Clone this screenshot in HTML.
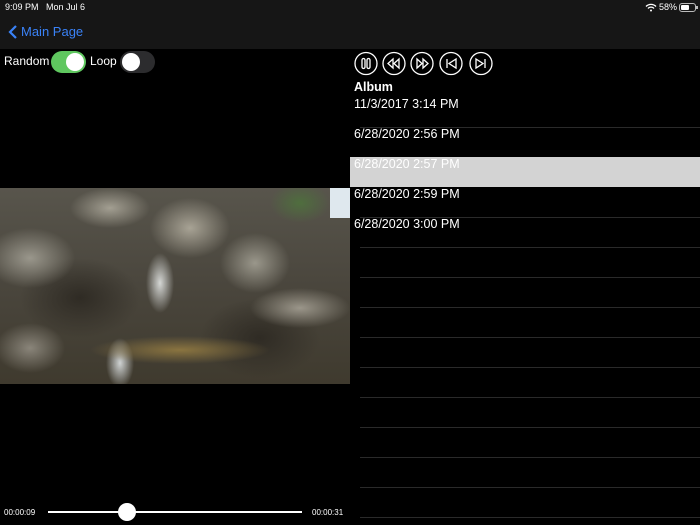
<!DOCTYPE html>
<html><head><style>
body{margin:0;width:700px;height:525px;background:#000;font-family:"Liberation Sans",sans-serif;color:#fff;position:relative;overflow:hidden}
.a{position:absolute}
.sep{position:absolute;left:360px;right:0;height:1px;background:#2a2a2a}
.row{position:absolute;left:354px;font-size:12.5px}
</style></head><body>
<div class="a" style="left:0;top:0;width:700px;height:49px;background:#161616"></div>
<div class="a" style="left:5px;top:2px;font-size:9px">9:09 PM&nbsp;&nbsp;&nbsp;Mon Jul 6</div>
<div class="a" style="left:659px;top:2px;font-size:9px">58%</div>
<svg class="a" style="left:645px;top:3px" width="12" height="9" viewBox="0 0 12 9"><path d="M1 3.5a7 7 0 0 1 10 0M3 5.5a4 4 0 0 1 6 0" stroke="#fff" stroke-width="1.3" fill="none"/><circle cx="6" cy="7.5" r="1" fill="#fff"/></svg>
<div class="a" style="left:679px;top:3px;width:17px;height:9px;border:1px solid #bbb;border-radius:3px;box-sizing:border-box"><div style="margin:1px;width:8px;height:5px;background:#fff;border-radius:1px"></div></div>
<div class="a" style="left:696px;top:6px;width:1.5px;height:3px;background:#bbb"></div>
<svg class="a" style="left:8px;top:24px" width="10" height="16"><path d="M8 2L2 8l6 6" stroke="#3a82f7" stroke-width="2.2" fill="none"/></svg>
<div class="a" style="left:21px;top:24px;font-size:13px;color:#3a82f7">Main Page</div>
<div class="a" style="left:4px;top:54px;font-size:12px">Random</div>
<div class="a" style="left:51px;top:51px;width:35px;height:22px;border-radius:11px;background:#5fc75f"><div style="position:absolute;right:2px;top:2px;width:18px;height:18px;border-radius:50%;background:#fff"></div></div>
<div class="a" style="left:90px;top:54px;font-size:12px">Loop</div>
<div class="a" style="left:120px;top:51px;width:35px;height:22px;border-radius:11px;background:#2c2c2e"><div style="position:absolute;left:2px;top:2px;width:18px;height:18px;border-radius:50%;background:#fff"></div></div>

<div class="a" style="left:0;top:188px;width:350px;height:196px;background:
radial-gradient(ellipse 45px 30px at 30px 70px,#9a978c,transparent),
radial-gradient(ellipse 35px 30px at 255px 75px,#9a978b,transparent),
radial-gradient(ellipse 40px 30px at 190px 40px,#a8a395,transparent),
radial-gradient(ellipse 90px 14px at 180px 162px,#8a7440,transparent),
radial-gradient(ellipse 35px 25px at 30px 160px,#8a857a,transparent),
radial-gradient(ellipse 50px 20px at 300px 120px,#9b968a,transparent),
radial-gradient(ellipse 14px 30px at 160px 95px,#d5d7d5,transparent),
radial-gradient(ellipse 14px 25px at 120px 175px,#cfd3d3,transparent),
radial-gradient(ellipse 40px 20px at 110px 20px,#a39f92,transparent),
radial-gradient(ellipse 30px 20px at 300px 15px,#4f6e3e,transparent),
radial-gradient(ellipse 60px 40px at 80px 110px,#2f2b24,transparent),
radial-gradient(ellipse 60px 40px at 260px 150px,#2f2b24,transparent),
linear-gradient(#58554c,#4a463d 50%,#3f3a2e)"></div>
<div class="a" style="left:330px;top:188px;width:20px;height:30px;background:#dfe8ee"></div>

<div class="a" style="left:4px;top:508px;font-size:8px">00:00:09</div>
<div class="a" style="left:48px;top:511px;width:254px;height:2px;background:#fff"></div>
<div class="a" style="left:118px;top:503px;width:18px;height:18px;border-radius:50%;background:#fff"></div>
<div class="a" style="left:312px;top:508px;font-size:8px">00:00:31</div>

<svg class="a" style="left:354px;top:51px" width="140" height="25" viewBox="0 0 140 25" fill="none" stroke="#fff" stroke-width="1.3">
<circle cx="12" cy="12.5" r="11"/><rect x="8" y="7.5" width="3" height="10" rx="1.5"/><rect x="13" y="7.5" width="3" height="10" rx="1.5"/>
<circle cx="40" cy="12.5" r="11"/><path d="M39 8l-5 4.5 5 4.5zM45 8l-5 4.5 5 4.5z"/>
<circle cx="68" cy="12.5" r="11"/><path d="M63 8l5 4.5-5 4.5zM69 8l5 4.5-5 4.5z"/>
<circle cx="97" cy="12.5" r="11"/><path d="M93 8v9M102 8l-7 4.5 7 4.5z"/>
<circle cx="127" cy="12.5" r="11"/><path d="M131 8v9M122 8l7 4.5-7 4.5z"/>
</svg>
<div class="row" style="top:80px;font-weight:bold">Album</div>
<div class="row" style="top:97px">11/3/2017 3:14 PM</div>
<div class="sep" style="top:127px"></div>
<div class="row" style="top:127px">6/28/2020 2:56 PM</div>
<div class="a" style="left:350px;top:157px;width:350px;height:30px;background:#d3d3d3"></div>
<div class="row" style="top:157px">6/28/2020 2:57 PM</div>
<div class="row" style="top:187px">6/28/2020 2:59 PM</div>
<div class="sep" style="top:217px"></div>
<div class="row" style="top:217px">6/28/2020 3:00 PM</div>
<div class="sep" style="top:247px"></div><div class="sep" style="top:277px"></div><div class="sep" style="top:307px"></div><div class="sep" style="top:337px"></div><div class="sep" style="top:367px"></div><div class="sep" style="top:397px"></div><div class="sep" style="top:427px"></div><div class="sep" style="top:457px"></div><div class="sep" style="top:487px"></div><div class="sep" style="top:517px"></div>
</body></html>
